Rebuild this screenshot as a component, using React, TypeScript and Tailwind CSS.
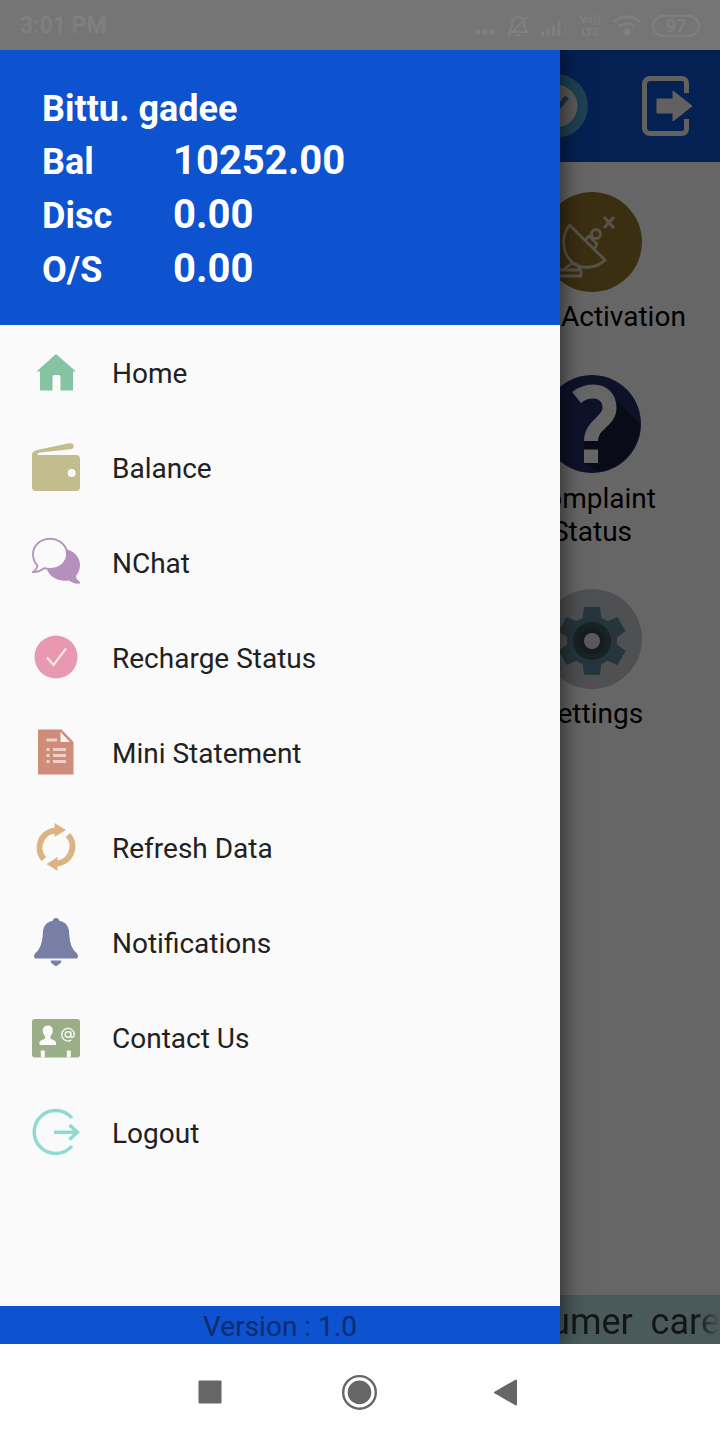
import React from 'react';

type IconProps = { children: React.ReactNode };

function MenuIcon({ children }: IconProps) {
  return (
    <svg viewBox="0 0 48 48" className="h-12 w-12 shrink-0" fill="none" aria-hidden="true">
      {children}
    </svg>
  );
}

const menuItems = [
  {
    label: 'Home',
    icon: (
      <MenuIcon>
        <path d="M24 6 44 23.500H41V42.500H28.500V29a2 2 0 0 0-2-2h-4a2 2 0 0 0-2 2v13.500H8V23.500H4.500Z" fill="#86c3a2" />
      </MenuIcon>
    ),
  },
  {
    label: 'Balance',
    icon: (
      <MenuIcon>
        <path d="M0 12.500C0 9 2 8 5 7L37 .3c3-.6 4.600.700 4.600 3 0 2-1 2.900-3 3L8 9.600c-2.500.300-3 1.900-2 2.400H44a4 4 0 0 1 4 4V44a4 4 0 0 1-4 4H4a4 4 0 0 1-4-4Z" fill="#c3bd8d" />
        <circle cx="39.700" cy="30" r="4" fill="#fafafa" />
      </MenuIcon>
    ),
  },
  {
    label: 'NChat',
    icon: (
      <MenuIcon>
        <path d="M34 11c8 2 14 8 14 16 0 5-2 8-4 11 0 3 2 4.500 4 6v1.500c-4 .5-8-.5-11-3-10 1.500-19-3-22-11Z" fill="#b590bd" />
        <path d="M18 .8c9.500 0 17 6.700 17 15.200S27.500 31 18 31c-2 0-4-.3-6-.8C8.500 33 5 34 1.200 34c2.800-2 4-4 4.300-6.500C2.500 24.500 1 20.500 1 16 1 7.500 8.500.8 18 .8Z" fill="#fafafa" stroke="#b590bd" strokeWidth="1.800" />
      </MenuIcon>
    ),
  },
  {
    label: 'Recharge Status',
    icon: (
      <MenuIcon>
        <circle cx="24" cy="24" r="21.500" fill="#e898b1" />
        <path d="M15 24.500l6.500 7.500L34 15.500" stroke="#fbe3ea" strokeWidth="2.200" />
      </MenuIcon>
    ),
  },
  {
    label: 'Mini Statement',
    icon: (
      <MenuIcon>
        <path d="M6 1.500H29.500L41.500 14V46.500H6Z" fill="#d08c7a" />
        <path d="M28.500 4 38 14H28.500Z" fill="#fdf3f0" />
        <path d="M14.500 12H25M14.500 21.500h3M21 21.500h13M14.500 27.500h3M21 27.500h13M14.500 33.500h3M21 33.500h13" stroke="#f0cfc6" strokeWidth="3" />
      </MenuIcon>
    ),
  },
  {
    label: 'Refresh Data',
    icon: (
      <MenuIcon>
        <path d="M12 36A17 17 0 0 1 25 7.500M36 12A17 17 0 0 1 23 40.500" stroke="#dcb481" strokeWidth="6" />
        <path d="M22.500 0 34 7 22.500 14ZM25.500 34 14.500 41 25.500 48Z" fill="#dcb481" />
      </MenuIcon>
    ),
  },
  {
    label: 'Notifications',
    icon: (
      <MenuIcon>
        <path d="M21 2.500C21 1 22 0 24 0s3 1 3 2.500c6 1.500 9.500 5 10 11 .600 9 1.500 14 5 19 2 2 4 3.500 4 6 0 1.500-1 2-3 2H5c-2 0-3-.5-3-2 0-2.500 2-4 4-6 3.500-5 4.400-10 5-19 .5-6 4-9.500 10-11Z" fill="#777fa4" />
        <path d="M18.500 42.500h11c-.5 2.500-1.500 3.500-3 3.800-.5 1-1.200 1.700-2.500 1.700s-2-.7-2.500-1.700c-1.500-.3-2.500-1.300-3-3.800Z" fill="#777fa4" />
      </MenuIcon>
    ),
  },
  {
    label: 'Contact Us',
    icon: (
      <MenuIcon>
        <rect y="6" width="48" height="38.500" rx="3" fill="#9aae87" />
        <path d="M16 12.500c3 0 4.800 2 4.800 5 0 2.500-1 4.500-2.300 5.500v2.500c2 1.500 5.500 1.500 5.500 4.500v2H7.500v-2c0-3 3.500-3 5.500-4.500V23c-1.300-1-2.300-3-2.300-5.500 0-3 1.800-5 5.300-5Z" fill="#fafafa" />
        <circle cx="36" cy="21.500" r="2.800" stroke="#f2f5ee" strokeWidth="1.500" />
        <path d="M38.800 18.500v4.500c0 2 3.500 2 3.500-1.500a6.300 6.300 0 1 0-3 5.500" stroke="#f2f5ee" strokeWidth="1.500" />
        <path d="M10.800 37.500V44.500M36.800 37.500V44.500" stroke="#fafafa" strokeWidth="4" />
      </MenuIcon>
    ),
  },
  {
    label: 'Logout',
    icon: (
      <MenuIcon>
        <path d="M40 10A21.500 21.500 0 1 0 40 38" stroke="#8ddad4" strokeWidth="3.400" />
        <path d="M22 24.200H46M37.500 17 45.500 24.200 37.500 31.500" stroke="#8ddad4" strokeWidth="3.400" />
      </MenuIcon>
    ),
  },
];

const balances = [
  { label: 'Bal', value: '10252.00' },
  { label: 'Disc', value: '0.00' },
  { label: 'O/S', value: '0.00' },
];

const tiles = [
  {
    label: 'New Activation',
    icon: (
      <svg viewBox="0 0 100 100" className="h-[100px] w-[100px]" fill="none" aria-hidden="true">
        <circle cx="50" cy="50" r="50" fill="#94762c" />
        <g stroke="#dccdb8" strokeWidth="2.800" strokeLinejoin="round">
          <path d="M27.500 33 63 68c-9 9-25 10-34 1-9-9-10-25-1.500-36Z" />
          <path d="M43 48l4-4 8 8-3 5M47 44l4 1" />
          <circle cx="54" cy="42" r="4.500" />
          <path d="M30 71 21 78H39L35 73ZM10 78h29v6H10Z" />
          <path d="M62 25l10 11M72 25 62 36" strokeWidth="3.200" />
        </g>
      </svg>
    ),
  },
  {
    label: 'Complaint Status',
    icon: (
      <svg viewBox="0 0 100 100" className="h-[100px] w-[100px]" fill="none" aria-hidden="true">
        <circle cx="50" cy="50" r="49" fill="#232f66" />
        <path d="M72 24 98 50a49 49 0 0 1-42 48L42 89V67L60 48Z" fill="#181d38" />
        <path d="M34.500 23.500C40 19 45 17.500 51 17.500c10 0 16.500 6 16.500 16.500C67.500 48 49 50 49 67" stroke="#fff" strokeWidth="14" />
        <path d="M42 75.500h14v13.500H42Z" fill="#fff" />
      </svg>
    ),
  },
  {
    label: 'Settings',
    icon: (
      <svg viewBox="0 0 100 100" className="h-[100px] w-[100px]" fill="none" aria-hidden="true">
        <circle cx="50" cy="50" r="50" fill="#c3c8ce" />
        <g fill="#5f8496">
          <circle cx="50" cy="52" r="25" />
          <path d="M42 18H58L60 34H40Z" />
          <path d="M42 18H58L60 34H40Z" transform="rotate(60 50 52)" />
          <path d="M42 18H58L60 34H40Z" transform="rotate(120 50 52)" />
          <path d="M42 18H58L60 34H40Z" transform="rotate(180 50 52)" />
          <path d="M42 18H58L60 34H40Z" transform="rotate(240 50 52)" />
          <path d="M42 18H58L60 34H40Z" transform="rotate(300 50 52)" />
        </g>
        <circle cx="50" cy="52" r="19" fill="#3f555d" />
        <circle cx="50" cy="52" r="13" fill="#374a52" />
        <circle cx="50" cy="52" r="8" fill="#dfe2e6" />
      </svg>
    ),
  },
];

function StatusBar() {
  return (
    <div className="flex h-[50px] items-center justify-between bg-[#757575] px-5 pt-0.5 text-[#7f7f7f]">
      <span className="text-[23px] font-bold">3:01 PM</span>
      <div className="flex items-center gap-[11px]">
        <svg viewBox="0 0 24 24" className="h-6 w-6" fill="currentColor" aria-hidden="true">
          <circle cx="6.500" cy="18" r="2.500" />
          <circle cx="14" cy="18" r="2.500" />
          <circle cx="21.500" cy="18" r="2.500" />
        </svg>
        <svg viewBox="0 0 24 24" className="h-6 w-6" fill="none" stroke="currentColor" strokeWidth="2" aria-hidden="true">
          <path d="M3 18h18c-2-2-3-4-3-8 0-4-2-7-6-7s-6 3-6 7c0 4-1 6-3 8ZM9 21h6M2 22 22 2" />
        </svg>
        <svg viewBox="0 0 26 24" className="h-6 w-[26px]" fill="currentColor" aria-hidden="true">
          <path d="M0 18h3v4H0zM5.500 15h3v7h-3zM11 11h3v11h-3zM16.500 7h3v15h-3z" />
          <path d="M22 3h3v19h-3z" opacity="0.300" />
        </svg>
        <span className="flex w-6 flex-col items-center text-[11px] leading-[13px] font-bold">
          <span>Vo))</span>
          <span>LTE</span>
        </span>
        <svg viewBox="0 0 28 24" className="h-6 w-7" fill="none" stroke="currentColor" strokeWidth="3" aria-hidden="true">
          <path d="M1 8C8 1 20 1 27 8M6 13C11 8.500 17 8.500 22 13" />
          <circle cx="14" cy="18" r="2" fill="currentColor" />
        </svg>
        <span className="flex h-[22px] w-12 items-center justify-center rounded-full border-2 border-current text-lg leading-none font-bold">
          97
        </span>
      </div>
    </div>
  );
}

function AppPage() {
  return (
    <div className="flex flex-1 flex-col bg-white">
      <header className="flex h-28 items-center justify-end gap-[54px] bg-[#0d52cf] pr-7">
        <button type="button" aria-label="Verified">
          <svg viewBox="0 0 64 64" className="h-16 w-16" fill="none" aria-hidden="true">
            <circle cx="32" cy="32" r="32" fill="#4aa3cf" />
            <circle cx="32" cy="32" r="21.500" fill="#e9e4dc" />
            <path d="M20 32l8 9 15-18" stroke="#3a86b0" strokeWidth="5" />
          </svg>
        </button>
        <button type="button" aria-label="Exit">
          <svg viewBox="0 0 50 60" className="h-[60px] w-[50px]" fill="none" aria-hidden="true">
            <path d="M44.500 17V7a4.500 4.500 0 0 0-4.500-4.500H8A5.500 5.500 0 0 0 2.500 8V52A5.500 5.500 0 0 0 8 57.500H40a4.500 4.500 0 0 0 4.500-4.500V43" stroke="#f4f2ee" strokeWidth="5" />
            <path d="M15 23H31V15L50 30 31 45V37H15Z" fill="#f4f2ee" stroke="#f4f2ee" strokeLinejoin="round" />
          </svg>
        </button>
      </header>
      <main className="flex flex-1 flex-col items-end">
        <ul className="flex w-64 flex-col items-center gap-[41px] pt-[30px]">
          {tiles.map((tile) => (
            <li key={tile.label}>
              <button type="button" className="flex w-[200px] flex-col items-center gap-2 text-[28px] leading-[33px] text-black">
                {tile.icon}
                {tile.label}
              </button>
            </li>
          ))}
        </ul>
      </main>
      <div className="flex h-[49px] items-center justify-end bg-[#b8e0e4] pt-1">
        <p className="whitespace-pre text-4xl text-black/75 [mask-image:linear-gradient(to_left,transparent,black_24px)]">
          Consumer  care
        </p>
      </div>
    </div>
  );
}

function Drawer() {
  return (
    <aside className="absolute inset-y-0 left-0 flex w-[560px] max-w-[80%] flex-col bg-[#fafafa] shadow-[0_0_24px_rgba(0,0,0,0.7)]">
      <div className="bg-[#0d52cf] px-[42px] pt-8 pb-[31px] text-4xl font-bold text-white">
        <p className="leading-[54px]">Bittu. gadee</p>
        <dl className="flex flex-col gap-1">
          {balances.map((row) => (
            <div key={row.label} className="flex h-[50px] items-baseline">
              <dt className="w-[131px] leading-[50px]">{row.label}</dt>
              <dd className="text-[40px] leading-[50px]">{row.value}</dd>
            </div>
          ))}
        </dl>
      </div>
      <nav className="flex-1">
        <ul>
          {menuItems.map((item) => (
            <li key={item.label}>
              <a href="#" className="flex items-start gap-8 px-8 pt-[23px] pb-5 text-[28px] leading-[52px] text-[#212121]">
                {item.icon}
                {item.label}
              </a>
            </li>
          ))}
        </ul>
      </nav>
      <footer className="bg-[#0d52cf] pt-[3px] text-center text-[28px] leading-[35px] text-[#0b2c70]">Version : 1.0</footer>
    </aside>
  );
}

function SystemNav() {
  return (
    <div className="flex h-24 items-center justify-center bg-white text-[#666666]">
      <button type="button" aria-label="Recent apps" className="flex w-[150px] justify-center">
        <svg viewBox="0 0 36 36" className="h-9 w-9" fill="currentColor" aria-hidden="true">
          <rect x="6.500" y="6.500" width="23" height="23" rx="1" />
        </svg>
      </button>
      <button type="button" aria-label="Home screen" className="flex w-[150px] justify-center">
        <svg viewBox="0 0 36 36" className="h-9 w-9" fill="currentColor" aria-hidden="true">
          <circle cx="17.500" cy="18.400" r="16.300" fill="none" stroke="currentColor" strokeWidth="2.400" />
          <circle cx="17.500" cy="18.400" r="11.800" />
        </svg>
      </button>
      <button type="button" aria-label="Back" className="flex w-[150px] justify-center">
        <svg viewBox="0 0 36 36" className="h-9 w-9" fill="currentColor" aria-hidden="true">
          <path d="M3 18.500 24 6.500V30.500Z" stroke="currentColor" strokeWidth="2" strokeLinejoin="round" />
        </svg>
      </button>
    </div>
  );
}

export default function App() {
  return (
    <div className="flex min-h-screen flex-col font-['Roboto',sans-serif]">
      <StatusBar />
      <div className="relative flex flex-1 flex-col overflow-hidden">
        <AppPage />
        {/* Scrim behind the open drawer */}
        <div className="absolute inset-0 bg-black/60" />
        <Drawer />
      </div>
      <SystemNav />
    </div>
  );
}
